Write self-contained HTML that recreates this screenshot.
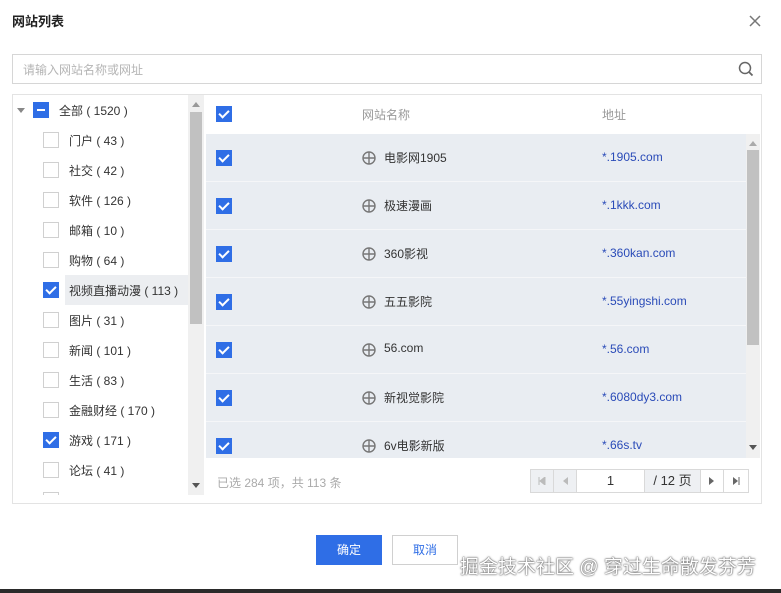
<!DOCTYPE html>
<html><head><meta charset="utf-8"><style>
*{margin:0;padding:0;box-sizing:border-box}
body{width:781px;height:593px;background:#fff;font-family:"Liberation Sans","Noto Sans CJK SC",sans-serif;position:relative;overflow:hidden;color:#333}
.a{position:absolute}
.cb{position:absolute;width:16px;height:16px;border:1px solid #d0d0d0;background:#fff}
.cb.on{background:#2f6ee6;border-color:#2f6ee6}
.cb.on::after{content:"";position:absolute;left:4px;top:1px;width:4px;height:8px;border:solid #fff;border-width:0 2px 2px 0;transform:rotate(45deg)}
.cb.ind{background:#2f6ee6;border-color:#2f6ee6}
.t{position:absolute;font-size:12px;color:#333;white-space:nowrap}
.row{position:absolute;left:206px;width:540px;height:48px;background:#e9edf2;border-bottom:1px solid #f5f6f8}
.g{position:absolute;left:156px;top:17px}
.nm{position:absolute;left:178px;top:15px;font-size:12px;color:#333}
.url{position:absolute;left:396px;top:16px;font-size:12px;color:#2a4bb8}
.pg{position:absolute;top:469px;height:24px;border:1px solid #d9d9d9;background:#eef0f3;font-size:12px;color:#aaa;text-align:center;line-height:22px}
</style></head><body>
<div class="t" style="left:12px;top:11px;font-size:13px;font-weight:bold;color:#222">网站列表</div>
<svg class="a" style="left:749px;top:15px" width="12" height="12"><path d="M1 1L11 11M11 1L1 11" stroke="#777" stroke-width="1.5"/></svg>
<div class="a" style="left:12px;top:54px;width:750px;height:30px;border:1px solid #d6d6d6"></div>
<div class="t" style="left:23px;top:61px;color:#b5b5b5">请输入网站名称或网址</div>
<svg class="a" style="left:738px;top:61px" width="16" height="16"><circle cx="7" cy="7" r="5.5" fill="none" stroke="#666" stroke-width="1.5"/><path d="M11 11L14.5 14.5" stroke="#666" stroke-width="1.8"/></svg>
<div class="a" style="left:12px;top:94px;width:750px;height:410px;border:1px solid #e3e3e3"></div>
<!-- left tree -->
<svg class="a" style="left:16px;top:106px" width="10" height="8"><path d="M1 2L9 2L5 7Z" fill="#888"/></svg>
<div class="cb ind" style="left:33px;top:102px"></div>
<div class="a" style="left:37px;top:109px;width:8px;height:2px;background:#fff"></div>
<div class="t" style="left:59px;top:102px">全部 ( 1520 )</div>
<div class="a" style="left:65px;top:275px;width:123px;height:30px;background:#eceef1"></div>
<div class="cb" style="left:43px;top:132px"></div><div class="t" style="left:69px;top:132px">门户 ( 43 )</div>
<div class="cb" style="left:43px;top:162px"></div><div class="t" style="left:69px;top:162px">社交 ( 42 )</div>
<div class="cb" style="left:43px;top:192px"></div><div class="t" style="left:69px;top:192px">软件 ( 126 )</div>
<div class="cb" style="left:43px;top:222px"></div><div class="t" style="left:69px;top:222px">邮箱 ( 10 )</div>
<div class="cb" style="left:43px;top:252px"></div><div class="t" style="left:69px;top:252px">购物 ( 64 )</div>
<div class="cb on" style="left:43px;top:282px"></div><div class="t" style="left:69px;top:282px">视频直播动漫 ( 113 )</div>
<div class="cb" style="left:43px;top:312px"></div><div class="t" style="left:69px;top:312px">图片 ( 31 )</div>
<div class="cb" style="left:43px;top:342px"></div><div class="t" style="left:69px;top:342px">新闻 ( 101 )</div>
<div class="cb" style="left:43px;top:372px"></div><div class="t" style="left:69px;top:372px">生活 ( 83 )</div>
<div class="cb" style="left:43px;top:402px"></div><div class="t" style="left:69px;top:402px">金融财经 ( 170 )</div>
<div class="cb on" style="left:43px;top:432px"></div><div class="t" style="left:69px;top:432px">游戏 ( 171 )</div>
<div class="cb" style="left:43px;top:462px"></div><div class="t" style="left:69px;top:462px">论坛 ( 41 )</div>
<div class="a" style="left:43px;top:492px;width:16px;height:3px;border:1px solid #d0d0d0;border-bottom:0"></div>
<div class="a" style="left:13px;top:495px;width:175px;height:8px;background:#fff"></div>
<div class="a" style="left:188px;top:95px;width:16px;height:400px;background:#f0f0f0"></div>
<div class="a" style="left:190px;top:112px;width:12px;height:212px;background:#c1c1c1"></div>
<svg class="a" style="left:192px;top:102px" width="8" height="5"><path d="M0 5L4 0L8 5Z" fill="#999"/></svg>
<svg class="a" style="left:192px;top:483px" width="8" height="5"><path d="M0 0L4 5L8 0Z" fill="#555"/></svg>
<!-- right -->
<div class="a" style="left:205px;top:95px;width:556px;height:39px;background:#fff"></div>
<div class="cb on" style="left:216px;top:106px"></div>
<div class="t" style="left:362px;top:106px;color:#999">网站名称</div>
<div class="t" style="left:602px;top:106px;color:#999">地址</div>
<div class="a" style="left:206px;top:134px;width:540px;height:324px;overflow:hidden">
<div class="row" style="left:0;top:0"><div class="cb on" style="left:10px;top:16px"></div><svg class="g" width="14" height="14"><circle cx="7" cy="7" r="6" fill="none" stroke="#777" stroke-width="1.4"/><path d="M1 7H13M7 1V13" stroke="#777" stroke-width="1.4"/></svg><div class="nm">电影网1905</div><div class="url">*.1905.com</div></div>
<div class="row" style="left:0;top:48px"><div class="cb on" style="left:10px;top:16px"></div><svg class="g" width="14" height="14"><circle cx="7" cy="7" r="6" fill="none" stroke="#777" stroke-width="1.4"/><path d="M1 7H13M7 1V13" stroke="#777" stroke-width="1.4"/></svg><div class="nm">极速漫画</div><div class="url">*.1kkk.com</div></div>
<div class="row" style="left:0;top:96px"><div class="cb on" style="left:10px;top:16px"></div><svg class="g" width="14" height="14"><circle cx="7" cy="7" r="6" fill="none" stroke="#777" stroke-width="1.4"/><path d="M1 7H13M7 1V13" stroke="#777" stroke-width="1.4"/></svg><div class="nm">360影视</div><div class="url">*.360kan.com</div></div>
<div class="row" style="left:0;top:144px"><div class="cb on" style="left:10px;top:16px"></div><svg class="g" width="14" height="14"><circle cx="7" cy="7" r="6" fill="none" stroke="#777" stroke-width="1.4"/><path d="M1 7H13M7 1V13" stroke="#777" stroke-width="1.4"/></svg><div class="nm">五五影院</div><div class="url">*.55yingshi.com</div></div>
<div class="row" style="left:0;top:192px"><div class="cb on" style="left:10px;top:16px"></div><svg class="g" width="14" height="14"><circle cx="7" cy="7" r="6" fill="none" stroke="#777" stroke-width="1.4"/><path d="M1 7H13M7 1V13" stroke="#777" stroke-width="1.4"/></svg><div class="nm">56.com</div><div class="url">*.56.com</div></div>
<div class="row" style="left:0;top:240px"><div class="cb on" style="left:10px;top:16px"></div><svg class="g" width="14" height="14"><circle cx="7" cy="7" r="6" fill="none" stroke="#777" stroke-width="1.4"/><path d="M1 7H13M7 1V13" stroke="#777" stroke-width="1.4"/></svg><div class="nm">新视觉影院</div><div class="url">*.6080dy3.com</div></div>
<div class="row" style="left:0;top:288px"><div class="cb on" style="left:10px;top:16px"></div><svg class="g" width="14" height="14"><circle cx="7" cy="7" r="6" fill="none" stroke="#777" stroke-width="1.4"/><path d="M1 7H13M7 1V13" stroke="#777" stroke-width="1.4"/></svg><div class="nm">6v电影新版</div><div class="url">*.66s.tv</div></div>
</div>
<div class="a" style="left:746px;top:134px;width:14px;height:324px;background:#f0f0f0"></div>
<div class="a" style="left:747px;top:150px;width:12px;height:195px;background:#c1c1c1"></div>
<svg class="a" style="left:749px;top:141px" width="8" height="5"><path d="M0 5L4 0L8 5Z" fill="#aaa"/></svg>
<svg class="a" style="left:749px;top:445px" width="8" height="5"><path d="M0 0L4 5L8 0Z" fill="#555"/></svg>
<div class="t" style="left:217px;top:474px;color:#aaa">已选 284 项，共 113 条</div>
<div class="pg" style="left:530px;width:24px"><svg width="8" height="8" style="margin-top:7px"><path d="M1 0V8M7 0L2 4L7 8Z" fill="#bbb" stroke="#bbb" stroke-width="1"/></svg></div>
<div class="pg" style="left:553px;width:24px"><svg width="6" height="8" style="margin-top:7px"><path d="M6 0L1 4L6 8Z" fill="#bbb"/></svg></div>
<div class="pg" style="left:576px;width:69px;background:#fff;color:#333;font-size:13px">1</div>
<div class="pg" style="left:644px;width:57px;color:#333;font-size:13px">/ 12 页</div>
<div class="pg" style="left:700px;width:24px;background:#fff"><svg width="6" height="8" style="margin-top:7px"><path d="M0 0L5 4L0 8Z" fill="#666"/></svg></div>
<div class="pg" style="left:723px;width:26px;background:#fff"><svg width="8" height="8" style="margin-top:7px"><path d="M1 0L6 4L1 8Z" fill="#666"/><path d="M7 0V8" stroke="#666"/></svg></div>
<!-- buttons -->
<div class="a" style="left:316px;top:535px;width:66px;height:30px;background:#2f6ee6;color:#fff;font-size:12px;text-align:center;line-height:30px">确定</div>
<div class="a" style="left:392px;top:535px;width:66px;height:30px;border:1px solid #d0d0d0;background:#fff;color:#2f6ee6;font-size:12px;text-align:center;line-height:28px">取消</div>
<div class="t" style="left:460px;top:552px;font-size:19px;color:#fff;text-shadow:0 0 2px #555,0 0 1px #333;">掘金技术社区 @ 穿过生命散发芬芳</div>
<div class="a" style="left:0;top:589px;width:781px;height:4px;background:#2a2a2a"></div>
</body></html>
